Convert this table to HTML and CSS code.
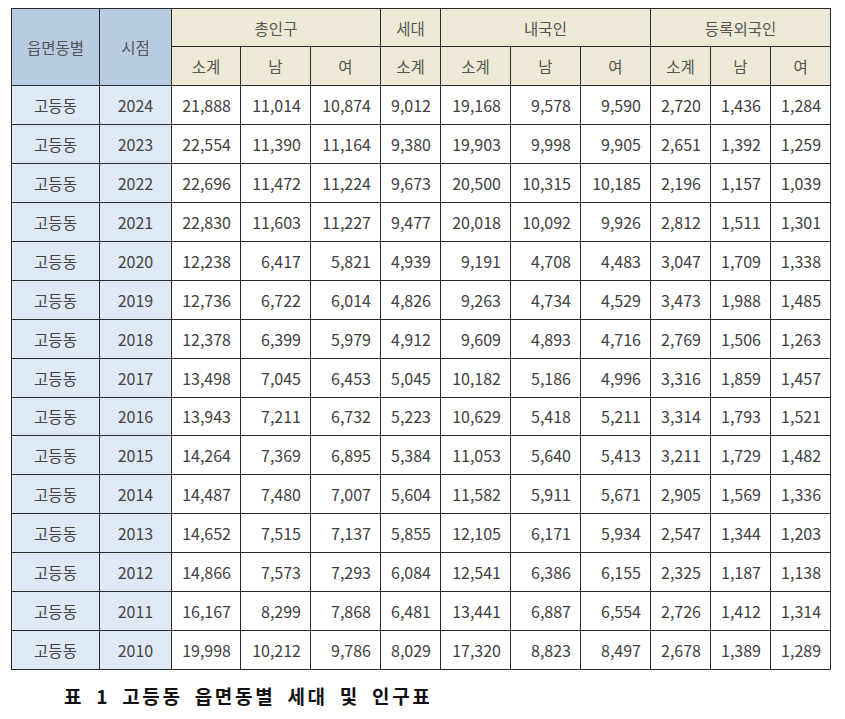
FILE: index.html
```html
<!DOCTYPE html>
<html lang="ko">
<head>
<meta charset="utf-8">
<title>고등동 읍면동별 세대 및 인구표</title>
<link rel="stylesheet" href="styles.css">
</head>
<body>
<div class="page">
<table class="pop">
  <colgroup>
    <col class="c88"><col class="c72"><col class="c69"><col class="c70"><col class="c70"><col class="c60">
    <col class="c70"><col class="c70"><col class="c70"><col class="c60"><col class="c60"><col class="c60">
  </colgroup>
  <thead>
    <tr class="h1">
      <th rowspan="2" class="key">읍면동별</th>
      <th rowspan="2" class="key">시점</th>
      <th colspan="3">총인구</th>
      <th>세대</th>
      <th colspan="3">내국인</th>
      <th colspan="3">등록외국인</th>
    </tr>
    <tr class="h2">
      <th>소계</th><th>남</th><th>여</th>
      <th>소계</th>
      <th>소계</th><th>남</th><th>여</th>
      <th>소계</th><th>남</th><th>여</th>
    </tr>
  </thead>
  <tbody>
    <tr><td class="dong">고등동</td><td class="yr">2024</td><td>21,888</td><td>11,014</td><td>10,874</td><td>9,012</td><td>19,168</td><td>9,578</td><td>9,590</td><td>2,720</td><td>1,436</td><td>1,284</td></tr>
    <tr><td class="dong">고등동</td><td class="yr">2023</td><td>22,554</td><td>11,390</td><td>11,164</td><td>9,380</td><td>19,903</td><td>9,998</td><td>9,905</td><td>2,651</td><td>1,392</td><td>1,259</td></tr>
    <tr><td class="dong">고등동</td><td class="yr">2022</td><td>22,696</td><td>11,472</td><td>11,224</td><td>9,673</td><td>20,500</td><td>10,315</td><td>10,185</td><td>2,196</td><td>1,157</td><td>1,039</td></tr>
    <tr><td class="dong">고등동</td><td class="yr">2021</td><td>22,830</td><td>11,603</td><td>11,227</td><td>9,477</td><td>20,018</td><td>10,092</td><td>9,926</td><td>2,812</td><td>1,511</td><td>1,301</td></tr>
    <tr><td class="dong">고등동</td><td class="yr">2020</td><td>12,238</td><td>6,417</td><td>5,821</td><td>4,939</td><td>9,191</td><td>4,708</td><td>4,483</td><td>3,047</td><td>1,709</td><td>1,338</td></tr>
    <tr><td class="dong">고등동</td><td class="yr">2019</td><td>12,736</td><td>6,722</td><td>6,014</td><td>4,826</td><td>9,263</td><td>4,734</td><td>4,529</td><td>3,473</td><td>1,988</td><td>1,485</td></tr>
    <tr><td class="dong">고등동</td><td class="yr">2018</td><td>12,378</td><td>6,399</td><td>5,979</td><td>4,912</td><td>9,609</td><td>4,893</td><td>4,716</td><td>2,769</td><td>1,506</td><td>1,263</td></tr>
    <tr><td class="dong">고등동</td><td class="yr">2017</td><td>13,498</td><td>7,045</td><td>6,453</td><td>5,045</td><td>10,182</td><td>5,186</td><td>4,996</td><td>3,316</td><td>1,859</td><td>1,457</td></tr>
    <tr><td class="dong">고등동</td><td class="yr">2016</td><td>13,943</td><td>7,211</td><td>6,732</td><td>5,223</td><td>10,629</td><td>5,418</td><td>5,211</td><td>3,314</td><td>1,793</td><td>1,521</td></tr>
    <tr><td class="dong">고등동</td><td class="yr">2015</td><td>14,264</td><td>7,369</td><td>6,895</td><td>5,384</td><td>11,053</td><td>5,640</td><td>5,413</td><td>3,211</td><td>1,729</td><td>1,482</td></tr>
    <tr><td class="dong">고등동</td><td class="yr">2014</td><td>14,487</td><td>7,480</td><td>7,007</td><td>5,604</td><td>11,582</td><td>5,911</td><td>5,671</td><td>2,905</td><td>1,569</td><td>1,336</td></tr>
    <tr><td class="dong">고등동</td><td class="yr">2013</td><td>14,652</td><td>7,515</td><td>7,137</td><td>5,855</td><td>12,105</td><td>6,171</td><td>5,934</td><td>2,547</td><td>1,344</td><td>1,203</td></tr>
    <tr><td class="dong">고등동</td><td class="yr">2012</td><td>14,866</td><td>7,573</td><td>7,293</td><td>6,084</td><td>12,541</td><td>6,386</td><td>6,155</td><td>2,325</td><td>1,187</td><td>1,138</td></tr>
    <tr><td class="dong">고등동</td><td class="yr">2011</td><td>16,167</td><td>8,299</td><td>7,868</td><td>6,481</td><td>13,441</td><td>6,887</td><td>6,554</td><td>2,726</td><td>1,412</td><td>1,314</td></tr>
    <tr><td class="dong">고등동</td><td class="yr">2010</td><td>19,998</td><td>10,212</td><td>9,786</td><td>8,029</td><td>17,320</td><td>8,823</td><td>8,497</td><td>2,678</td><td>1,389</td><td>1,289</td></tr>
  </tbody>
</table>
<p class="caption">표 1 고등동 읍면동별 세대 및 인구표</p>
</div>
</body>
</html>
```

FILE: styles.css
```css
html, body {
  margin: 0;
  padding: 0;
  background: #ffffff;
}

.page {
  padding: 8px 0 0 11px;
  font-family: "Noto Sans CJK KR", "Noto Sans", sans-serif;
}

.pop {
  border-collapse: collapse;
  table-layout: fixed;
  width: 820px;
  border: 1px solid #222;
  font-size: 16px;
  color: #404040;
}

.c88 { width: 88px; }
.c72 { width: 72px; }
.c69 { width: 69px; }
.c70 { width: 70px; }
.c60 { width: 60px; }

.pop th,
.pop td {
  border: 1px solid #2a2a2a;
  padding: 0 9px 0 0;
  line-height: 20px;
  white-space: nowrap;
  overflow: hidden;
}

.pop th {
  font-weight: 400;
  font-size: 15.5px;
  color: #555;
  background: #eee9d6;
  text-align: center;
  padding: 0;
}

.pop th.key {
  background: #b9cbe1;
}

.h1 { height: 38px; }
.h2 { height: 39px; }

.pop tbody tr { height: 38.95px; }

.pop td {
  text-align: right;
  background: #fff;
}

.pop td.dong,
.pop td.yr {
  background: #dfe9f6;
  text-align: center;
  padding: 0;
  color: #444;
}

.pop td.dong {
  font-size: 15.5px;
}

.pop td:nth-child(n+10) {
  border-left-color: #555;
}

.caption {
  margin: 12px 0 0 53px;
  font-size: 19px;
  font-weight: 700;
  letter-spacing: 2.7px;
  word-spacing: 4px;
  color: #111;
  line-height: 28px;
}
```
